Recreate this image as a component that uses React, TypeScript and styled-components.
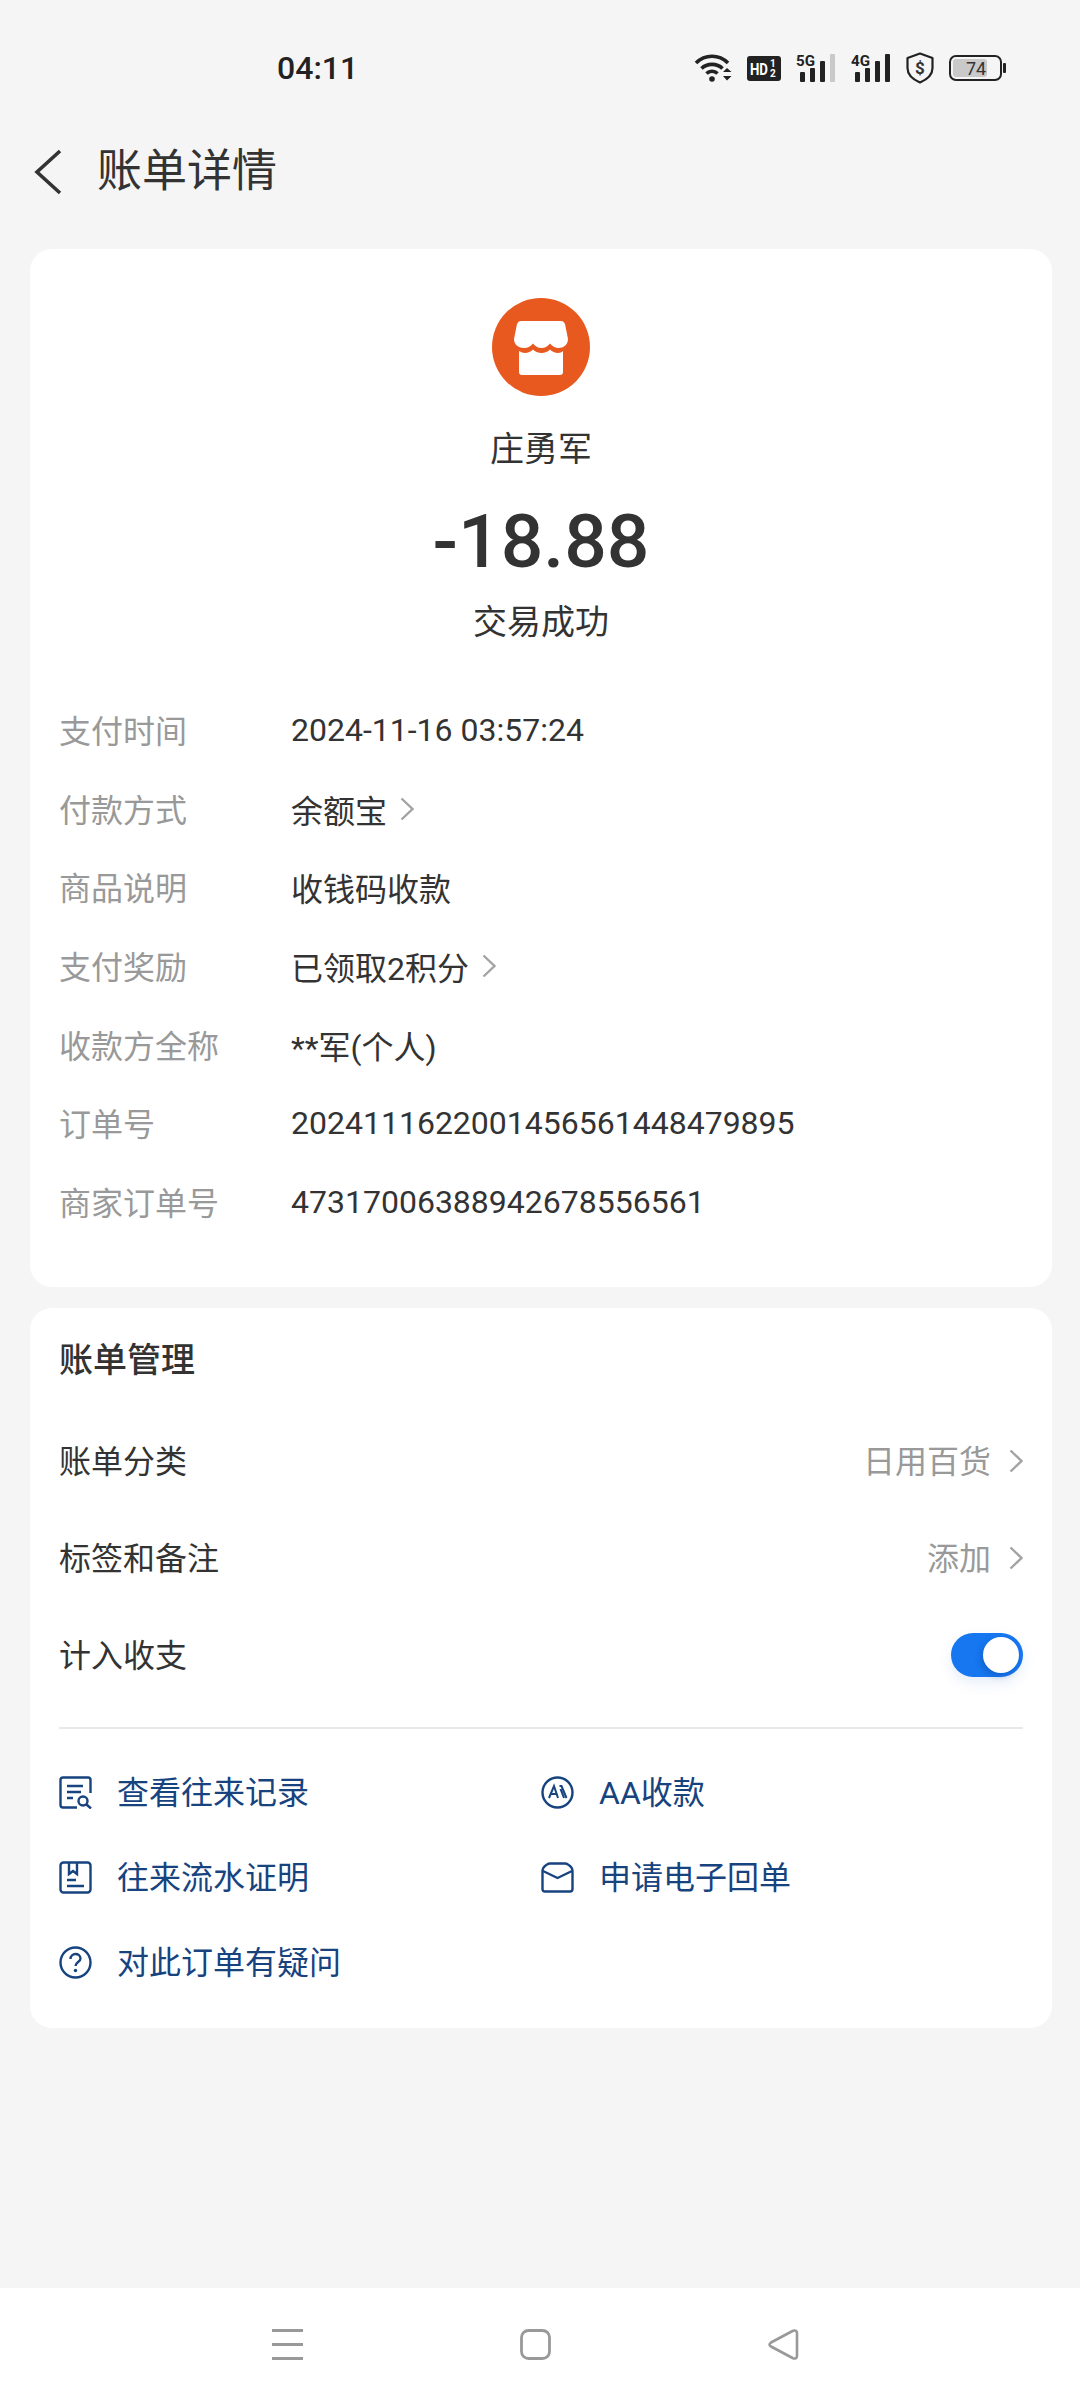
import React from 'react';
import styled, { createGlobalStyle } from 'styled-components';

const GlobalStyle = createGlobalStyle`
  html, body {
    margin: 0;
    padding: 0;
    background: #f5f5f5;
  }
  * {
    box-sizing: border-box;
  }
`;

const Screen = styled.div`
  width: 1080px;
  height: 2400px;
  display: flex;
  flex-direction: column;
  overflow: hidden;
  background: #f5f5f5;
  color: #333;
  font-family: Roboto, 'Noto Sans CJK SC', sans-serif;
`;

const StatusBar = styled.div`
  height: 136px;
  flex: none;
  display: flex;
  align-items: center;
  justify-content: space-between;
  padding: 0 74px 0 277px;
`;

const Clock = styled.span`
  font-size: 32px;
  font-weight: 500;
  color: #222;
`;

const StatusIcons = styled.div`
  display: flex;
  align-items: center;
  gap: 15px;
`;

const Header = styled.header`
  height: 72px;
  flex: none;
  display: flex;
  align-items: center;
  gap: 34px;
  padding-left: 33px;
  margin-bottom: 41px;
`;

const Title = styled.h1`
  margin: 0;
  font-size: 45px;
  font-weight: 400;
  color: #333;
  line-height: 72px;
`;

const Card = styled.section`
  margin: 0 28px 21px 30px;
  padding: 0 29px 0 29px;
  background: #fff;
  border-radius: 22px;
`;

const Summary = styled.div`
  display: flex;
  flex-direction: column;
  align-items: center;
  padding-top: 49px;
`;

const Payee = styled.div`
  margin-top: 31px;
  font-size: 34px;
  line-height: 44px;
  color: #333;
`;

const Amount = styled.div`
  margin-top: 25px;
  font-size: 75px;
  font-weight: 500;
  line-height: 90px;
  color: #333;
`;

const TradeStatus = styled.div`
  margin-top: 14px;
  font-size: 34px;
  line-height: 44px;
  color: #333;
`;

const DetailList = styled.div`
  margin-top: 47px;
  padding-bottom: 46px;
`;

const DetailRow = styled.div`
  height: 78.6px;
  display: grid;
  grid-template-columns: 232px 1fr;
  align-items: center;
  font-size: 32px;
`;

const DetailLabel = styled.span`
  padding-bottom: 2px;
  color: #999;
`;

const DetailValue = styled.span`
  display: flex;
  align-items: center;
  gap: 13px;
  color: #333;
  font-size: 32px;
`;

const SectionTitle = styled.h2`
  margin: 0;
  padding-top: 30px;
  font-size: 34px;
  font-weight: 500;
  line-height: 44px;
  color: #333;
`;

const ManageList = styled.div`
  margin-top: 30px;
`;

const ManageRow = styled.div`
  height: 97px;
  display: flex;
  align-items: center;
  justify-content: space-between;
  font-size: 32px;
  color: #333;
`;

const RowText = styled.span`
  padding-bottom: 4px;
`;

const ManageValue = styled.span`
  display: flex;
  align-items: center;
  gap: 18px;
  color: #999;
`;

const Toggle = styled.div`
  width: 72px;
  height: 44px;
  padding: 4px;
  display: flex;
  justify-content: flex-end;
  border-radius: 22px;
  background: #1677f0;
  box-shadow: 0 6px 14px rgba(22, 90, 200, 0.1);
`;

const Knob = styled.div`
  width: 36px;
  height: 36px;
  border-radius: 50%;
  background: #fff;
  box-shadow: -2px 3px 6px rgba(10, 60, 140, 0.35);
`;

const Divider = styled.hr`
  margin: 24px 0 0;
  border: 0;
  border-top: 2px solid #e8e8e8;
`;

const LinkGrid = styled.div`
  margin-top: 21px;
  padding-bottom: 23px;
  display: grid;
  grid-template-columns: 482px 1fr;
  grid-auto-rows: 85px;
`;

const LinkItem = styled.div`
  display: flex;
  align-items: center;
  gap: 25px;
  font-size: 32px;
  color: #17437f;
`;

const LinkText = styled.span`
  padding-bottom: 5px;
`;

const NavBar = styled.nav`
  margin-top: auto;
  height: 112px;
  flex: none;
  display: flex;
  align-items: center;
  gap: 217px;
  padding-left: 272px;
  background: #fff;
`;

const Chevron = () => (
  <svg width="14" height="24" viewBox="0 0 14 24" fill="none">
    <path d="M1.500 1.500 L12.500 12 L1.500 22.500" stroke="#a3a3a3" strokeWidth="2.400" />
  </svg>
);

const BackIcon = () => (
  <svg width="30" height="46" viewBox="0 0 30 46" fill="none">
    <path d="M27 2 L4 23 L27 44" stroke="#333" strokeWidth="3.600" />
  </svg>
);

const WifiIcon = () => (
  <svg width="38" height="30" viewBox="0 0 38 30" fill="none">
    <path d="M2 10 C11 1 25 1 34 10" stroke="#222" strokeWidth="3.600" />
    <path d="M7.500 15.500 C13 10 23 10 28.500 15.500" stroke="#222" strokeWidth="3.600" />
    <path d="M12.500 20.500 C15.500 17.500 20.500 17.500 23.500 20.500" stroke="#222" strokeWidth="3.600" />
    <circle cx="18" cy="26" r="2.800" fill="#222" />
    <path d="M29 19 L33 15 L37.500 19 Z M29 23 L37.500 23 L33 27.500 Z" fill="#222" />
  </svg>
);

const HdIcon = () => (
  <svg width="34" height="25" viewBox="0 0 34 25">
    <rect width="34" height="25" rx="3" fill="#222" />
    <text x="3" y="19" fontFamily="Roboto, sans-serif" fontWeight="700" fontSize="17" fill="#fff" textLength="18" lengthAdjust="spacingAndGlyphs">HD</text>
    <text x="23" y="11" fontFamily="Roboto, sans-serif" fontWeight="700" fontSize="10" fill="#fff">1</text>
    <text x="23" y="21" fontFamily="Roboto, sans-serif" fontWeight="700" fontSize="10" fill="#fff">2</text>
  </svg>
);

const SignalIcon = ({ label, full }: { label: string; full?: boolean }) => (
  <svg width="40" height="30" viewBox="0 0 40 30">
    <text x="0" y="13" fontFamily="Roboto, sans-serif" fontWeight="700" fontSize="14" fill="#222" textLength="19" lengthAdjust="spacingAndGlyphs">{label}</text>
    <rect x="4" y="19" width="5" height="10" rx="1" fill="#222" />
    <rect x="14" y="15" width="5" height="14" rx="1" fill="#222" />
    <rect x="24" y="8" width="5" height="21" rx="1" fill="#222" />
    <rect x="34" y="1" width="5" height="28" rx="1" fill={full ? '#222' : '#c9c9c9'} />
  </svg>
);

const ShieldIcon = () => (
  <svg width="28" height="32" viewBox="0 0 28 32" fill="none">
    <path d="M14 1.500 L26.500 6 V16 C26.500 23 21 27.500 14 30.500 C7 27.500 1.500 23 1.500 16 V6 Z" stroke="#222" strokeWidth="2.200" strokeLinejoin="round" />
    <text x="14" y="22" textAnchor="middle" fontFamily="Roboto, sans-serif" fontWeight="700" fontSize="17" fill="#333">$</text>
  </svg>
);

const BatteryIcon = () => (
  <svg width="57" height="26" viewBox="0 0 57 26">
    <rect x="1" y="1" width="51" height="24" rx="6" fill="none" stroke="#222" strokeWidth="2" />
    <rect x="4" y="4" width="34" height="18" rx="3" fill="#c9c9c9" />
    <rect x="54" y="8" width="3" height="10" rx="1" fill="#222" />
    <text x="27" y="20" textAnchor="middle" fontFamily="Roboto, sans-serif" fontSize="18" fill="#333">74</text>
  </svg>
);

const StoreIcon = () => (
  <svg width="98" height="98" viewBox="0 0 98 98">
    <circle cx="49" cy="49" r="49" fill="#e8591f" />
    <path
      d="M29 23 H69 C71 23 72 24 73 26 L76 41 C76 47 71 50 67 50 C63 50 60 48 58 45.500 C56 48 53 50 49.500 50 C46 50 43 48 41 45.500 C39 48 36 50 32 50 C27 50 22 47 22 41 L25 26 C26 24 27 23 29 23 Z"
      fill="#fff"
    />
    <path
      d="M27 53 C29 54 31 55 33 55 C36 55 39 53.500 41 51.500 C43 53.500 46 55 49.500 55 C53 55 56 53.500 58 51.500 C60 53.500 63 55 66 55 C68 55 70 54 71 53 V74 C71 76 70 77 68 77 H30 C28 77 27 76 27 74 Z"
      fill="#fff"
    />
  </svg>
);

const linkStroke = { stroke: '#17437f', strokeWidth: 2.4, fill: 'none' };

const RecordIcon = () => (
  <svg width="33" height="33" viewBox="0 0 33 33">
    <path d="M31.500 17 V4 C31.500 2.500 30.500 1.500 29 1.500 H4 C2.500 1.500 1.500 2.500 1.500 4 V29 C1.500 30.500 2.500 31.500 4 31.500 H18" {...linkStroke} />
    <path d="M8 10 H24 M8 16 H22 M8 22 H14" {...linkStroke} />
    <circle cx="24" cy="25" r="4.500" {...linkStroke} />
    <path d="M27.500 28.500 L32 32.500" {...linkStroke} />
  </svg>
);

const ProofIcon = () => (
  <svg width="33" height="33" viewBox="0 0 33 33">
    <rect x="1.500" y="1.500" width="30" height="30" rx="3" {...linkStroke} />
    <path d="M10 2 V13 L14 10 L18 13 V2" {...linkStroke} />
    <path d="M8 19 H17 M8 25 H25" {...linkStroke} />
  </svg>
);

const QuestionIcon = () => (
  <svg width="33" height="33" viewBox="0 0 33 33">
    <circle cx="16.500" cy="16.500" r="15" {...linkStroke} />
    <path d="M11.500 13 C11.500 6.500 21.500 6.500 21.500 12.500 C21.500 16 16.500 16 16.500 20" {...linkStroke} />
    <circle cx="16.500" cy="24.500" r="1.700" fill="#17437f" />
  </svg>
);

const AaIcon = () => (
  <svg width="33" height="33" viewBox="0 0 33 33">
    <circle cx="16.500" cy="16.500" r="15" {...linkStroke} />
    <path d="M8 22 L13 10 L17 22 M10 18 H15.500 M18.500 10 H20.500 L25.500 22 M19.500 13 L23 22" {...linkStroke} strokeWidth={2} />
  </svg>
);

const MailIcon = () => (
  <svg width="33" height="33" viewBox="0 0 33 33">
    <path d="M1.500 10 C1.500 6 3.500 5 6 3.500 C7 2.800 8 2.500 9 2.500 H24 C25 2.500 26 2.800 27 3.500 C29.500 5 31.500 6 31.500 10 V28 C31.500 29.500 30.500 30.500 29 30.500 H4 C2.500 30.500 1.500 29.500 1.500 28 Z" {...linkStroke} />
    <path d="M2 10 L16.500 17 L31 10" {...linkStroke} />
  </svg>
);

const MenuIcon = () => (
  <svg width="31" height="31" viewBox="0 0 31 31" fill="none">
    <path d="M0 1.500 H31 M0 15.500 H31 M0 29.500 H31" stroke="#999" strokeWidth="2.800" />
  </svg>
);

const HomeIcon = () => (
  <svg width="31" height="31" viewBox="0 0 31 31" fill="none">
    <rect x="1.500" y="1.500" width="28" height="28" rx="7" stroke="#999" strokeWidth="2.800" />
  </svg>
);

const TriangleIcon = () => (
  <svg width="31" height="31" viewBox="0 0 31 31" fill="none">
    <path d="M3 13.500 L25 1.800 C27.500 0.800 29 2 29 4 V27 C29 29 27.500 30.200 25 29.200 L3 17.500 C1 16.300 1 14.700 3 13.500 Z" stroke="#999" strokeWidth="2.600" />
  </svg>
);

const details: { label: string; value: string; more?: boolean }[] = [
  { label: '支付时间', value: '2024-11-16 03:57:24' },
  { label: '付款方式', value: '余额宝', more: true },
  { label: '商品说明', value: '收钱码收款' },
  { label: '支付奖励', value: '已领取2积分', more: true },
  { label: '收款方全称', value: '**军(个人)' },
  { label: '订单号', value: '2024111622001456561448479895' },
  { label: '商家订单号', value: '47317006388942678556561' },
];

const links = [
  { icon: <RecordIcon />, text: '查看往来记录' },
  { icon: <AaIcon />, text: 'AA收款' },
  { icon: <ProofIcon />, text: '往来流水证明' },
  { icon: <MailIcon />, text: '申请电子回单' },
  { icon: <QuestionIcon />, text: '对此订单有疑问' },
];

const App = () => {
  return (
    <Screen>
      <GlobalStyle />

      <StatusBar>
        <Clock>04:11</Clock>
        <StatusIcons>
          <WifiIcon />
          <HdIcon />
          <SignalIcon label="5G" />
          <SignalIcon label="4G" full />
          <ShieldIcon />
          <BatteryIcon />
        </StatusIcons>
      </StatusBar>

      <Header>
        <BackIcon />
        <Title>账单详情</Title>
      </Header>

      <Card>
        <Summary>
          <StoreIcon />
          <Payee>庄勇军</Payee>
          <Amount>-18.88</Amount>
          <TradeStatus>交易成功</TradeStatus>
        </Summary>
        <DetailList>
          {details.map((item) => (
            <DetailRow key={item.label}>
              <DetailLabel>{item.label}</DetailLabel>
              <DetailValue>
                {item.value}
                {item.more && <Chevron />}
              </DetailValue>
            </DetailRow>
          ))}
        </DetailList>
      </Card>

      <Card>
        <SectionTitle>账单管理</SectionTitle>
        <ManageList>
          <ManageRow>
            <RowText>账单分类</RowText>
            <ManageValue>
              <RowText>日用百货</RowText>
              <Chevron />
            </ManageValue>
          </ManageRow>
          <ManageRow>
            <RowText>标签和备注</RowText>
            <ManageValue>
              <RowText>添加</RowText>
              <Chevron />
            </ManageValue>
          </ManageRow>
          <ManageRow>
            <RowText>计入收支</RowText>
            <Toggle>
              <Knob />
            </Toggle>
          </ManageRow>
        </ManageList>
        <Divider />
        <LinkGrid>
          {links.map((link) => (
            <LinkItem key={link.text}>
              {link.icon}
              <LinkText>{link.text}</LinkText>
            </LinkItem>
          ))}
        </LinkGrid>
      </Card>

      <NavBar>
        <MenuIcon />
        <HomeIcon />
        <TriangleIcon />
      </NavBar>
    </Screen>
  );
};

export default App;
